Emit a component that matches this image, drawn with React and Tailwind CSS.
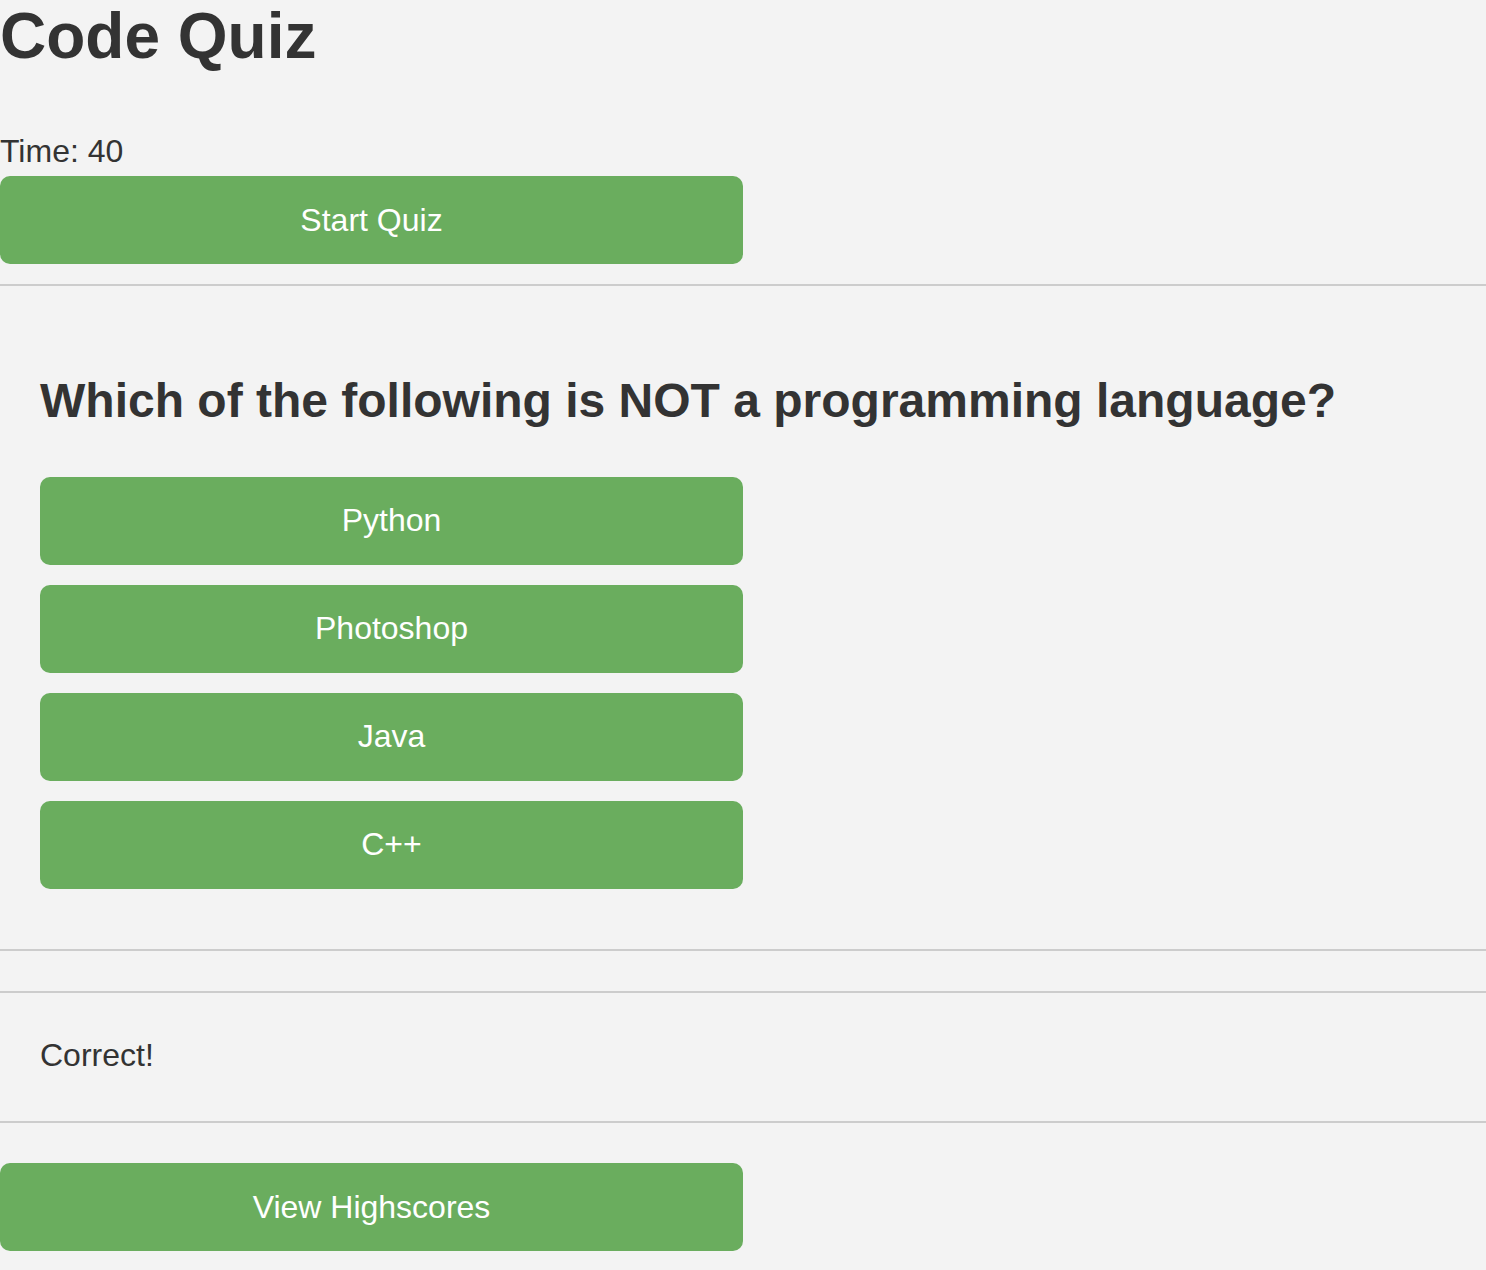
import React from 'react';

const answers = ['Python', 'Photoshop', 'Java', 'C++'];

export default function App() {
  return (
    <div className="min-h-screen bg-[#f3f3f3] text-[#333333] font-['Helvetica','Liberation_Sans',Arial,sans-serif] text-[32px] leading-[1.15]">
      <h1 className="text-[64px] font-bold leading-[1.15] m-0">Code Quiz</h1>

      <div className="mt-[59px]">Time: 40</div>
      <GreenButton className="mt-[7px] w-[743px]">Start Quiz</GreenButton>

      <hr className="mt-[20px] border-0 h-[2px] bg-[#cccccc]" />

      {/* Question */}
      <div className="px-10">
        <h2 className="mt-[87px] text-[48px] font-bold leading-[1.15]">
          Which of the following is NOT a programming language?
        </h2>
        <div className="mt-[48px] flex flex-col gap-5">
          {answers.map((a) => (
            <GreenButton key={a} className="w-[703px]">{a}</GreenButton>
          ))}
        </div>
      </div>

      <hr className="mt-[60px] border-0 h-[2px] bg-[#cccccc]" />
      <hr className="mt-[40px] border-0 h-[2px] bg-[#cccccc]" />

      <div className="px-10 pt-[44px] pb-[48px]">Correct!</div>

      <hr className="border-0 h-[2px] bg-[#cccccc]" />

      <GreenButton className="mt-[40px] w-[743px]">View Highscores</GreenButton>
    </div>
  );
}

function GreenButton({ children, className = '' }) {
  return (
    <button
      className={`block h-[88px] rounded-[10px] bg-[#6aad5e] text-white text-[32px] leading-[1.15] text-center ${className}`}
    >
      {children}
    </button>
  );
}
